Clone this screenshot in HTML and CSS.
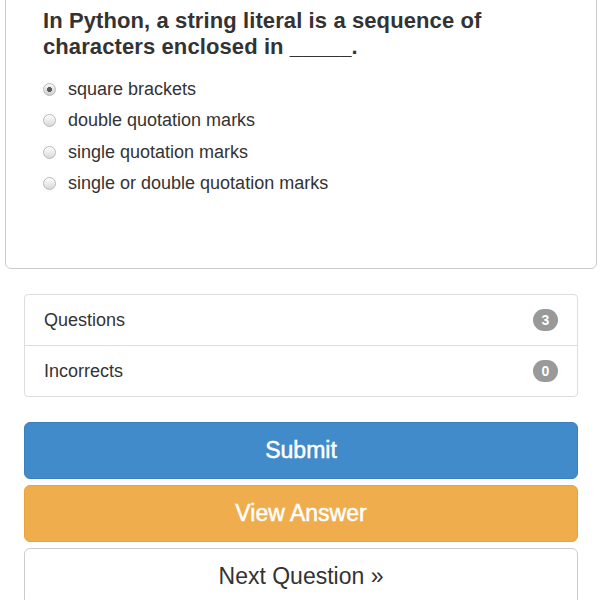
FILE: index.html
```html
<!DOCTYPE html>
<html>
<head>
<meta charset="utf-8">
<link rel="stylesheet" href="styles.css">
</head>
<body>
<div class="panel">
  <h3 class="question">In Python, a string literal is a sequence of characters enclosed in _____.</h3>
  <div class="options">
    <label class="option"><input type="radio" name="q" class="radio" checked><span>square brackets</span></label>
    <label class="option"><input type="radio" name="q" class="radio"><span>double quotation marks</span></label>
    <label class="option"><input type="radio" name="q" class="radio"><span>single quotation marks</span></label>
    <label class="option"><input type="radio" name="q" class="radio"><span>single or double quotation marks</span></label>
  </div>
</div>
<div class="side">
  <ul class="list-group">
    <li class="list-item"><span>Questions</span><span class="badge">3</span></li>
    <li class="list-item"><span>Incorrects</span><span class="badge">0</span></li>
  </ul>
  <div class="buttons">
    <button class="btn btn-primary">Submit</button>
    <button class="btn btn-warning">View Answer</button>
    <button class="btn btn-default">Next Question »</button>
  </div>
</div>
</body>
</html>
```
FILE: styles.css
```css
html, body {
  margin: 0;
  padding: 0;
  background: #fff;
  overflow: hidden;
}
body {
  font-family: "Liberation Sans", Arial, sans-serif;
  color: #333;
  padding: 0 3px 0 5px;
}
.panel {
  margin-top: -30px;
  border: 1px solid #ccc;
  border-radius: 6px;
  padding: 37px 30px 69px 37px;
}
.question {
  margin: 0 0 14px;
  font-size: 22px;
  line-height: 26px;
  font-weight: bold;
  color: #333;
  letter-spacing: 0.1px;
}
.options {
  display: flex;
  flex-direction: column;
}
.option {
  display: flex;
  align-items: center;
  height: 31.33px;
  font-size: 18px;
  cursor: pointer;
}
.radio {
  appearance: none;
  -webkit-appearance: none;
  margin: 0 12px 0 0;
  width: 13px;
  height: 13px;
  border-radius: 50%;
  border: 1px solid #b8b8b8;
  background: linear-gradient(#fefefe, #d8d8d8);
  box-shadow: inset 0 1px 1px rgba(255,255,255,0.8);
  position: relative;
  flex: none;
}
.radio:checked {
  background: radial-gradient(circle at 50% 50%, #5a5a5a 0, #5a5a5a 2.2px, transparent 2.8px), linear-gradient(#f4f4f4, #d0d0d0);
}
.side {
  padding: 25px 19px 0 19px;
}
.list-group {
  list-style: none;
  margin: 0 0 25px;
  padding: 0;
  border: 1px solid #ddd;
  border-radius: 4px;
}
.list-item {
  display: flex;
  justify-content: space-between;
  align-items: center;
  height: 50px;
  padding: 0 19px 0 19px;
  font-size: 18px;
}
.list-item + .list-item {
  border-top: 1px solid #ddd;
}
.badge {
  background: #999;
  color: #fff;
  font-weight: bold;
  font-size: 14px;
  min-width: 11px;
  height: 22px;
  line-height: 22px;
  padding: 0 7px;
  border-radius: 11px;
  text-align: center;
}
.buttons {
  display: flex;
  flex-direction: column;
  gap: 6px;
}
.btn {
  display: block;
  width: 100%;
  height: 57px;
  border-radius: 6px;
  font-family: "Liberation Sans", Arial, sans-serif;
  font-size: 23px;
  border: 1px solid transparent;
  cursor: pointer;
}
.btn-primary {
  background: #428bca;
  border-color: #3b7fbd;
  color: #fff;
  -webkit-text-stroke: 0.5px #fff;
}
.btn-warning {
  background: #f0ad4e;
  border-color: #eea236;
  color: #fff;
  -webkit-text-stroke: 0.5px #fff;
}
.btn-default {
  background: #fff;
  border-color: #ccc;
  color: #333;
}
```
